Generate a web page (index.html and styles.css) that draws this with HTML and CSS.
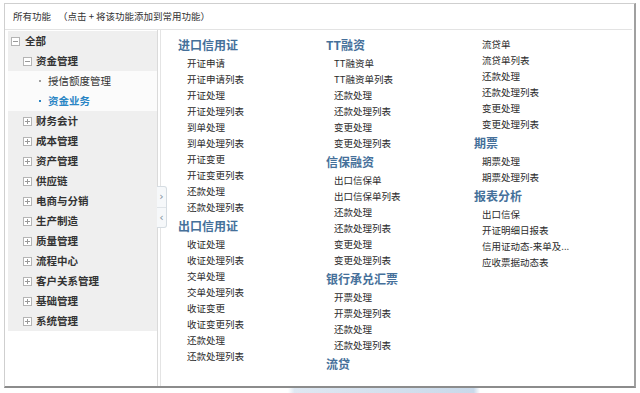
FILE: index.html
```html
<!DOCTYPE html>
<html lang="zh-CN">
	<head>
		<meta http-equiv="Content-Type" content="text/html; charset=utf-8" />
		<title>所有功能</title>
		<link rel="stylesheet" href="styles.css">
	</head>

	<body>
		<div class="dialog">
			<div class="dialog-title">所有功能<span class="hint">（点击 + 将该功能添加到常用功能）</span></div>

			<div class="dialog-body">
				<!-- Left tree -->
				<div class="side">
					<ul class="tree">
						<li class="node lv0"><svg class="tg" viewBox="0 0 9 9"><rect x="0.5" y="0.5" width="8" height="8"/><path d="M2 4.5h5"/></svg>全部</li>
						<li class="node lv1"><svg class="tg" viewBox="0 0 9 9"><rect x="0.5" y="0.5" width="8" height="8"/><path d="M2 4.5h5"/></svg>资金管理</li>
						<li class="node lv2 leaf"><i class="dot"></i>授信额度管理</li>
						<li class="node lv2 leaf active"><i class="dot"></i>资金业务</li>
						<li class="node lv1"><svg class="tg" viewBox="0 0 9 9"><rect x="0.5" y="0.5" width="8" height="8"/><path d="M2 4.5h5M4.5 2v5"/></svg>财务会计</li>
						<li class="node lv1"><svg class="tg" viewBox="0 0 9 9"><rect x="0.5" y="0.5" width="8" height="8"/><path d="M2 4.5h5M4.5 2v5"/></svg>成本管理</li>
						<li class="node lv1"><svg class="tg" viewBox="0 0 9 9"><rect x="0.5" y="0.5" width="8" height="8"/><path d="M2 4.5h5M4.5 2v5"/></svg>资产管理</li>
						<li class="node lv1"><svg class="tg" viewBox="0 0 9 9"><rect x="0.5" y="0.5" width="8" height="8"/><path d="M2 4.5h5M4.5 2v5"/></svg>供应链</li>
						<li class="node lv1"><svg class="tg" viewBox="0 0 9 9"><rect x="0.5" y="0.5" width="8" height="8"/><path d="M2 4.5h5M4.5 2v5"/></svg>电商与分销</li>
						<li class="node lv1"><svg class="tg" viewBox="0 0 9 9"><rect x="0.5" y="0.5" width="8" height="8"/><path d="M2 4.5h5M4.5 2v5"/></svg>生产制造</li>
						<li class="node lv1"><svg class="tg" viewBox="0 0 9 9"><rect x="0.5" y="0.5" width="8" height="8"/><path d="M2 4.5h5M4.5 2v5"/></svg>质量管理</li>
						<li class="node lv1"><svg class="tg" viewBox="0 0 9 9"><rect x="0.5" y="0.5" width="8" height="8"/><path d="M2 4.5h5M4.5 2v5"/></svg>流程中心</li>
						<li class="node lv1"><svg class="tg" viewBox="0 0 9 9"><rect x="0.5" y="0.5" width="8" height="8"/><path d="M2 4.5h5M4.5 2v5"/></svg>客户关系管理</li>
						<li class="node lv1"><svg class="tg" viewBox="0 0 9 9"><rect x="0.5" y="0.5" width="8" height="8"/><path d="M2 4.5h5M4.5 2v5"/></svg>基础管理</li>
						<li class="node lv1"><svg class="tg" viewBox="0 0 9 9"><rect x="0.5" y="0.5" width="8" height="8"/><path d="M2 4.5h5M4.5 2v5"/></svg>系统管理</li>
					</ul>
				</div>

				<!-- Splitter toggle -->
				<div class="collapse">
					<span class="arr">&rsaquo;</span>
					<span class="arr">&lsaquo;</span>
				</div>

				<!-- Function menu -->
				<div class="menu">
					<div class="menu-col">
						<h3>进口信用证</h3>
						<ul>
							<li>开证申请</li>
							<li>开证申请列表</li>
							<li>开证处理</li>
							<li>开证处理列表</li>
							<li>到单处理</li>
							<li>到单处理列表</li>
							<li>开证变更</li>
							<li>开证变更列表</li>
							<li>还款处理</li>
							<li>还款处理列表</li>
						</ul>
						<h3>出口信用证</h3>
						<ul>
							<li>收证处理</li>
							<li>收证处理列表</li>
							<li>交单处理</li>
							<li>交单处理列表</li>
							<li>收证变更</li>
							<li>收证变更列表</li>
							<li>还款处理</li>
							<li>还款处理列表</li>
						</ul>
					</div>

					<div class="menu-col">
						<h3>TT融资</h3>
						<ul>
							<li>TT融资单</li>
							<li>TT融资单列表</li>
							<li>还款处理</li>
							<li>还款处理列表</li>
							<li>变更处理</li>
							<li>变更处理列表</li>
						</ul>
						<h3>信保融资</h3>
						<ul>
							<li>出口信保单</li>
							<li>出口信保单列表</li>
							<li>还款处理</li>
							<li>还款处理列表</li>
							<li>变更处理</li>
							<li>变更处理列表</li>
						</ul>
						<h3>银行承兑汇票</h3>
						<ul>
							<li>开票处理</li>
							<li>开票处理列表</li>
							<li>还款处理</li>
							<li>还款处理列表</li>
						</ul>
						<h3>流贷</h3>
					</div>

					<div class="menu-col cont">
						<ul>
							<li>流贷单</li>
							<li>流贷单列表</li>
							<li>还款处理</li>
							<li>还款处理列表</li>
							<li>变更处理</li>
							<li>变更处理列表</li>
						</ul>
						<h3>期票</h3>
						<ul>
							<li>期票处理</li>
							<li>期票处理列表</li>
						</ul>
						<h3>报表分析</h3>
						<ul>
							<li>出口信保</li>
							<li>开证明细日报表</li>
							<li>信用证动态-来单及...</li>
							<li>应收票据动态表</li>
						</ul>
					</div>
				</div>
			</div>
		</div>

		<div class="underlay"></div>
	</body>
</html>
```

FILE: styles.css
```css
body {
	background-color: #fff;
	color: #2b2b2b;
	font-family: "Noto Sans CJK SC", "Noto Sans", sans-serif;
	height: 393px;
	margin: 0;
	overflow: hidden;
}
ul {
	list-style: none;
	margin: 0;
	padding: 0;
}

/* Dialog frame */
.dialog {
	background-color: #fff;
	border: 1px solid #cfcfcf;
	border-bottom: 2px solid #8c8c8c;
	border-right: 2px solid #a0a0a0;
	box-sizing: border-box;
	display: flex;
	flex-direction: column;
	height: 385px;
	margin: 3px 0 0 4px;
	width: 632px;
}
.dialog-title {
	border-bottom: 1px solid #e3e3e3;
	color: #333;
	flex: none;
	font-size: 9.5px;
	height: 25px;
	line-height: 25px;
	margin-right: 2px;
	padding-left: 8px;
}
.hint {
	margin-left: 7px;
}
.dialog-body {
	display: flex;
	flex: 1;
	min-height: 0;
	position: relative;
}

/* Tree */
.side {
	border-right: 1px solid #dadada;
	box-sizing: border-box;
	flex: none;
	width: 153px;
}
.tree {
	background-color: #efefef;
	margin: 1px 0 0 3px;
}
.node {
	align-items: center;
	color: #333;
	display: flex;
	font-size: 10.5px;
	font-weight: bold;
	height: 20px;
	line-height: 20px;
	white-space: nowrap;
}
.lv0 {
	padding-left: 3px;
}
.lv0 .tg {
	margin-right: 5px;
}
.lv1 {
	padding-left: 15px;
}
.lv1 .tg {
	margin-right: 4px;
}
.lv2 {
	background-color: #fbfbfb;
	font-weight: normal;
	padding-left: 31px;
}
.tg {
	fill: #fff;
	flex: none;
	height: 9px;
	stroke: #b4b4b4;
	stroke-width: 1;
	width: 9px;
}
.tg path {
	stroke: #999;
}
.dot {
	background-color: #a0a0a0;
	flex: none;
	height: 2px;
	margin-right: 7px;
	width: 2px;
}
.active {
	color: #2b86c5;
	font-weight: bold;
}
.active .dot {
	background-color: #2b86c5;
}

/* Splitter toggle */
.collapse {
	background-color: #f6f8fa;
	border: 1px solid #d5dce2;
	border-left: 0;
	border-radius: 0 3px 3px 0;
	box-sizing: border-box;
	display: flex;
	flex-direction: column;
	height: 42px;
	left: 152px;
	position: absolute;
	top: 156px;
	width: 10px;
}
.arr {
	color: #7f909e;
	flex: 1;
	font-family: "DejaVu Sans", sans-serif;
	font-size: 11px;
	line-height: 20px;
	text-align: center;
}
.arr + .arr {
	border-top: 1px solid #dfe4e8;
}

/* Function menu */
.menu {
	border-left: 1px solid #e4e4e4;
	display: flex;
	flex: 1;
	margin-left: 2px;
	padding: 4px 0 0 17px;
}
.menu-col {
	flex: none;
	width: 148px;
}
.menu-col.cont {
	padding-top: 2px;
}
.menu-col h3 {
	color: #45709a;
	font-size: 12px;
	font-weight: bold;
	line-height: 20px;
	margin: 0;
	padding-top: 1px;
}
.menu-col li {
	font-size: 9.5px;
	line-height: 16px;
	padding-left: 8px;
	white-space: nowrap;
}
.menu-col:first-child li {
	padding-left: 9px;
}

/* Page behind the dialog */
.underlay {
	background: linear-gradient(90deg, #fff 45%, #dfe8f2 46%, #c9d9ea 74%, #fff 75%);
	height: 5px;
}
```
